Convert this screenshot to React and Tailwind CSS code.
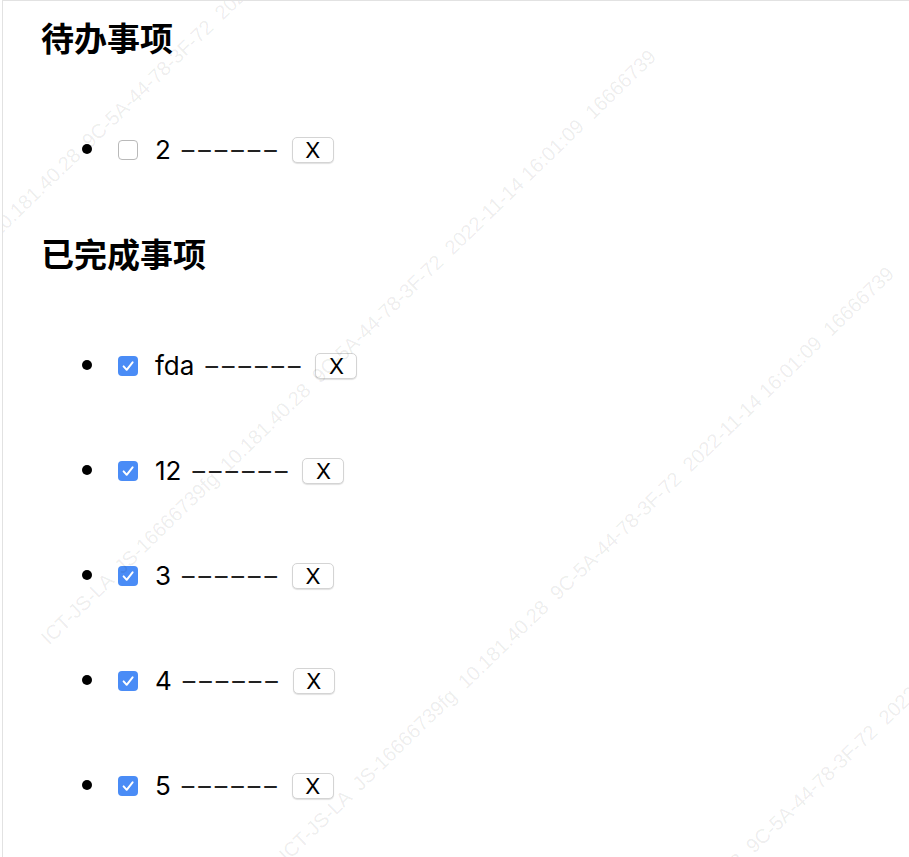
import { useState } from "react";

const WATERMARK =
  "ICT-JS-LA  JS-16666739fg  10.181.40.28  9C-5A-44-78-3F-72  2022-11-14 16:01:09  16666739";

function CheckBox({ checked }) {
  if (checked) {
    return (
      <span className="inline-flex h-[20px] w-[20px] shrink-0 items-center justify-center rounded-[4px] bg-[#4a8cf6]">
        <svg viewBox="0 0 20 20" className="h-[20px] w-[20px]">
          <path
            d="M5.6 10.4 L8.7 13.8 L14.6 6.4"
            fill="none"
            stroke="#fff"
            strokeWidth="2"
            strokeLinecap="round"
            strokeLinejoin="round"
          />
        </svg>
      </span>
    );
  }
  return (
    <span className="inline-block h-[20px] w-[20px] shrink-0 rounded-[4px] border border-[#b9b9b9] bg-white" />
  );
}

function TodoRow({ item, first }) {
  return (
    <li
      className={`flex h-[40px] items-center pl-[79px] ${
        first ? "mt-[71px]" : "mt-[65px]"
      }`}
    >
      <span className="mb-[3px] h-[10px] w-[10px] shrink-0 rounded-full bg-black" />
      <span className="ml-[26px] flex items-center">
        <CheckBox checked={item.done} />
      </span>
      <span className="ml-[17px] text-[26px] leading-none text-black">
        {item.text}
      </span>
      <span className="ml-[11px] text-[25px] leading-none tracking-[4px] text-[#222]">
        ––––––
      </span>
      <button
        type="button"
        className="ml-[11px] inline-flex h-[26px] w-[42px] items-center justify-center rounded-[5px] border border-[#d4d4d4] bg-white text-[22px] leading-none text-black shadow-[0_1px_1px_rgba(0,0,0,0.12)]"
      >
        X
      </button>
    </li>
  );
}

export default function App() {
  const [todos] = useState([
    { id: 1, text: "2", done: false },
    { id: 2, text: "fda", done: true },
    { id: 3, text: "12", done: true },
    { id: 4, text: "3", done: true },
    { id: 5, text: "4", done: true },
    { id: 6, text: "5", done: true },
  ]);

  const pending = todos.filter((t) => !t.done);
  const finished = todos.filter((t) => t.done);

  return (
    <div
      className="relative ml-[2px] min-h-[857px] overflow-hidden border-l border-t border-[#e2e2e2] bg-white"
      style={{ fontFamily: 'Inter, "Noto Sans CJK SC", sans-serif' }}
    >
      <div className="pl-[38px]">
        <h1 className="mt-[18px] text-[33px] font-bold leading-[40px] text-black">
          待办事项
        </h1>
      </div>
      <ul>
        {pending.map((t, i) => (
          <TodoRow key={t.id} item={t} first={i === 0} />
        ))}
      </ul>

      <div className="pl-[38px]">
        <h1 className="mt-[65px] text-[33px] font-bold leading-[40px] text-black">
          已完成事项
        </h1>
      </div>
      <ul className="pb-[40px]">
        {finished.map((t, i) => (
          <TodoRow key={t.id} item={t} first={i === 0} />
        ))}
      </ul>

      {/* watermark overlay */}
      <div
        className="pointer-events-none absolute inset-0 overflow-hidden text-[20px] leading-none text-black/[0.08]"
        style={{ fontFamily: '"Liberation Sans", sans-serif' }}
      >
        <span className="absolute left-[-182px] top-[392px] origin-bottom-left -rotate-[44deg] whitespace-pre">
          {WATERMARK}
        </span>
        <span className="absolute left-[48px] top-[627px] origin-bottom-left -rotate-[44deg] whitespace-pre">
          {WATERMARK}
        </span>
        <span className="absolute left-[286px] top-[844px] origin-bottom-left -rotate-[44deg] whitespace-pre">
          {WATERMARK}
        </span>
        <span className="absolute left-[482px] top-[1097px] origin-bottom-left -rotate-[44deg] whitespace-pre">
          {WATERMARK}
        </span>
      </div>
    </div>
  );
}
